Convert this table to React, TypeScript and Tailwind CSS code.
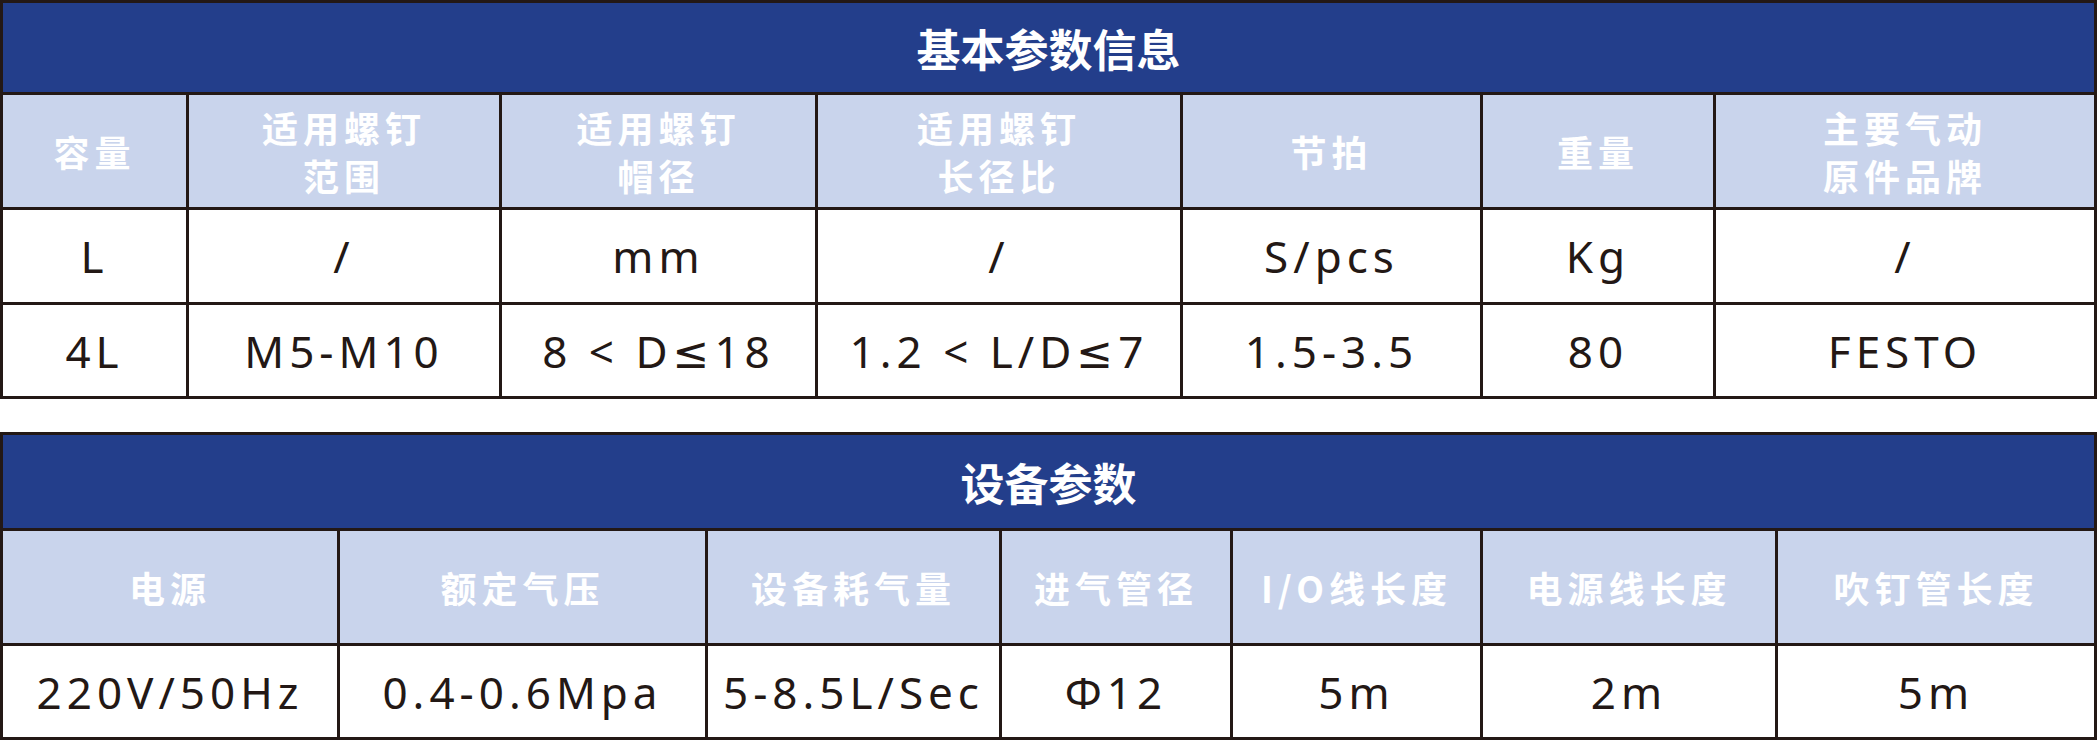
const basic = {
  cols: 'grid-cols-[186px_313px_316px_365px_300px_233px_381px]',
  title: '基本参数信息',
  head: [['容量'], ['适用螺钉', '范围'], ['适用螺钉', '帽径'], ['适用螺钉', '长径比'], ['节拍'], ['重量'], ['主要气动', '原件品牌']],
  rows: [
    ['L', '/', 'mm', '/', 'S/pcs', 'Kg', '/'],
    ['4L', 'M5-M10', '8 < D≤18', '1.2 < L/D≤7', '1.5-3.5', '80', 'FESTO'],
  ],
  rowH: ['h-[95px]', 'h-[94px]'],
  titleH: 'h-[92px]',
}

const device = {
  cols: 'grid-cols-[337px_368px_294px_231px_250px_295px_319px]',
  title: '设备参数',
  head: [['电源'], ['额定气压'], ['设备耗气量'], ['进气管径'], ['I/O线长度'], ['电源线长度'], ['吹钉管长度']],
  rows: [['220V/50Hz', '0.4-0.6Mpa', '5-8.5L/Sec', 'Φ12', '5m', '2m', '5m']],
  rowH: ['h-[94px]'],
  titleH: 'h-[96px]',
}

type Spec = typeof basic

function ParamTable({ spec }: { spec: Spec }) {
  const cell = 'flex items-center justify-center text-center border-r-[3px] border-b-[3px] border-[#231815]'
  return (
    <div className="w-[2097px] border-l-[3px] border-t-[3px] border-[#231815]">
      {/* 标题栏 */}
      <div
        className={`${spec.titleH} ${cell} bg-[#233e8b] text-white text-[44px] font-bold font-['Noto_Sans_CJK_SC',sans-serif]`}
      >
        {spec.title}
      </div>

      {/* 表头 */}
      <div className={`grid ${spec.cols}`}>
        {spec.head.map((lines, i) => (
          <div
            key={i}
            className={`h-[115px] ${cell} flex-col bg-[#c9d4ec] text-white text-[36px] leading-[48px] font-bold tracking-[5px] font-['Noto_Sans_CJK_SC',sans-serif]`}
          >
            {lines.map((t) => (
              <span key={t}>{t}</span>
            ))}
          </div>
        ))}
      </div>

      {/* 数据 */}
      {spec.rows.map((row, r) => (
        <div key={r} className={`grid ${spec.cols}`}>
          {row.map((v, i) => (
            <div
              key={i}
              className={`${spec.rowH[r]} ${cell} bg-white text-[#231815] text-[44px] tracking-[5px] font-['Noto_Sans','DejaVu_Sans','Noto_Sans_CJK_SC',sans-serif]`}
            >
              {v}
            </div>
          ))}
        </div>
      ))}
    </div>
  )
}

export default function App() {
  return (
    <div className="w-[2098px] h-[743px] bg-white">
      <ParamTable spec={basic} />
      <div className="h-[33px]" />
      <ParamTable spec={device} />
    </div>
  )
}
